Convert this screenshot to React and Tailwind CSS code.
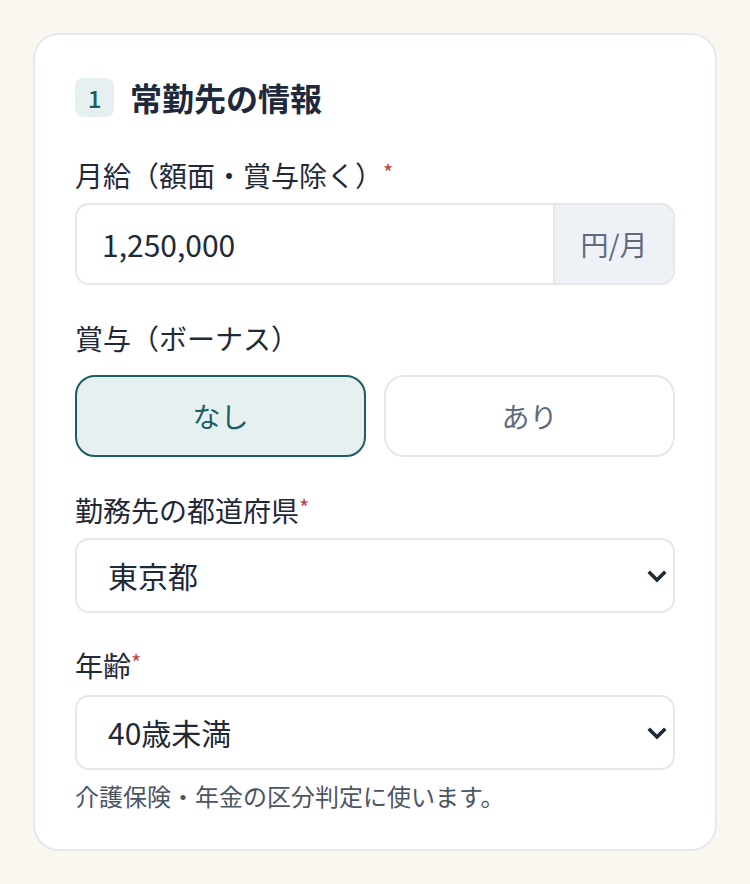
import { useState } from "react";

const Chevron = () => (
  <svg
    width="20"
    height="14"
    viewBox="0 0 20 14"
    fill="none"
    className="pointer-events-none absolute right-[8px] top-1/2 -translate-y-1/2"
  >
    <path
      d="M3 4l7 7 7-7"
      stroke="#1f2937"
      strokeWidth="3.6"
      strokeLinecap="square"
    />
  </svg>
);

const Label = ({ children, required, className = "" }) => (
  <div className={`text-[28px] leading-[40px] text-[#1f2937] ${className}`}>
    {children}
    {required && (
      <span className="relative -top-[6px] text-[22px] leading-none text-[#c0443f]">
        *
      </span>
    )}
  </div>
);

const SelectBox = ({ value, options, className = "" }) => (
  <div className={`relative ${className}`}>
    <select
      defaultValue={value}
      className="h-[75px] w-full appearance-none rounded-[14px] border-2 border-[#e5e7eb] bg-white pl-[31px] text-[30px] text-[#1f2937] outline-none"
    >
      {options.map((o) => (
        <option key={o}>{o}</option>
      ))}
    </select>
    <Chevron />
  </div>
);

export default function App() {
  const [bonus, setBonus] = useState("none");

  return (
    <div
      className="min-h-screen bg-[#faf7f0] px-[33px] pt-[33px] pb-[33px]"
      style={{ fontFamily: '"Noto Sans CJK JP", "Noto Sans", sans-serif' }}
    >
      <div className="rounded-[26px] border-2 border-[#e6e8ec] bg-white px-[40px] pt-[43px] pb-[36px]">
        <div className="flex items-center gap-[16px]">
          <div className="flex h-[39px] w-[39px] items-center justify-center rounded-[8px] bg-[#e6f0f0] text-[24px] font-medium text-[#1b5e63]">
            1
          </div>
          <h2 className="text-[32px] font-bold leading-[39px] text-[#1e2a3b]">
            常勤先の情報
          </h2>
        </div>

        <Label required className="mt-[38px]">
          月給（額面・賞与除く）
        </Label>
        <div className="mt-[8px] flex h-[82px] overflow-hidden rounded-[14px] border-2 border-[#e5e7eb]">
          <input
            defaultValue="1,250,000"
            className="min-w-0 flex-1 pl-[25px] text-[30px] text-[#1f2937] outline-none"
          />
          <div className="flex w-[120px] items-center justify-center border-l-2 border-[#e5e7eb] bg-[#eef1f6] text-[28px] text-[#5f6b7d]">
            円/月
          </div>
        </div>

        <Label className="mt-[33px]">賞与（ボーナス）</Label>
        <div className="mt-[17px] grid grid-cols-2 gap-[18px]">
          <button
            onClick={() => setBonus("none")}
            className={`h-[82px] rounded-[20px] border-2 text-[28px] ${
              bonus === "none"
                ? "border-[#1b5e63] bg-[#e6f0f0] text-[#1b5e63]"
                : "border-[#e5e7eb] bg-white text-[#5f6b7d]"
            }`}
          >
            なし
          </button>
          <button
            onClick={() => setBonus("yes")}
            className={`h-[82px] rounded-[20px] border-2 text-[28px] ${
              bonus === "yes"
                ? "border-[#1b5e63] bg-[#e6f0f0] text-[#1b5e63]"
                : "border-[#e5e7eb] bg-white text-[#5f6b7d]"
            }`}
          >
            あり
          </button>
        </div>

        <Label required className="mt-[33px]">
          勤務先の都道府県
        </Label>
        <SelectBox
          className="mt-[8px]"
          value="東京都"
          options={["北海道", "東京都", "神奈川県", "大阪府"]}
        />

        <Label required className="mt-[32px]">
          年齢
        </Label>
        <SelectBox
          className="mt-[10px]"
          value="40歳未満"
          options={["40歳未満", "40歳以上65歳未満", "65歳以上"]}
        />
        <p className="mt-[9px] text-[24px] leading-[34px] text-[#4b5563]">
          介護保険・年金の区分判定に使います。
        </p>
      </div>
    </div>
  );
}
